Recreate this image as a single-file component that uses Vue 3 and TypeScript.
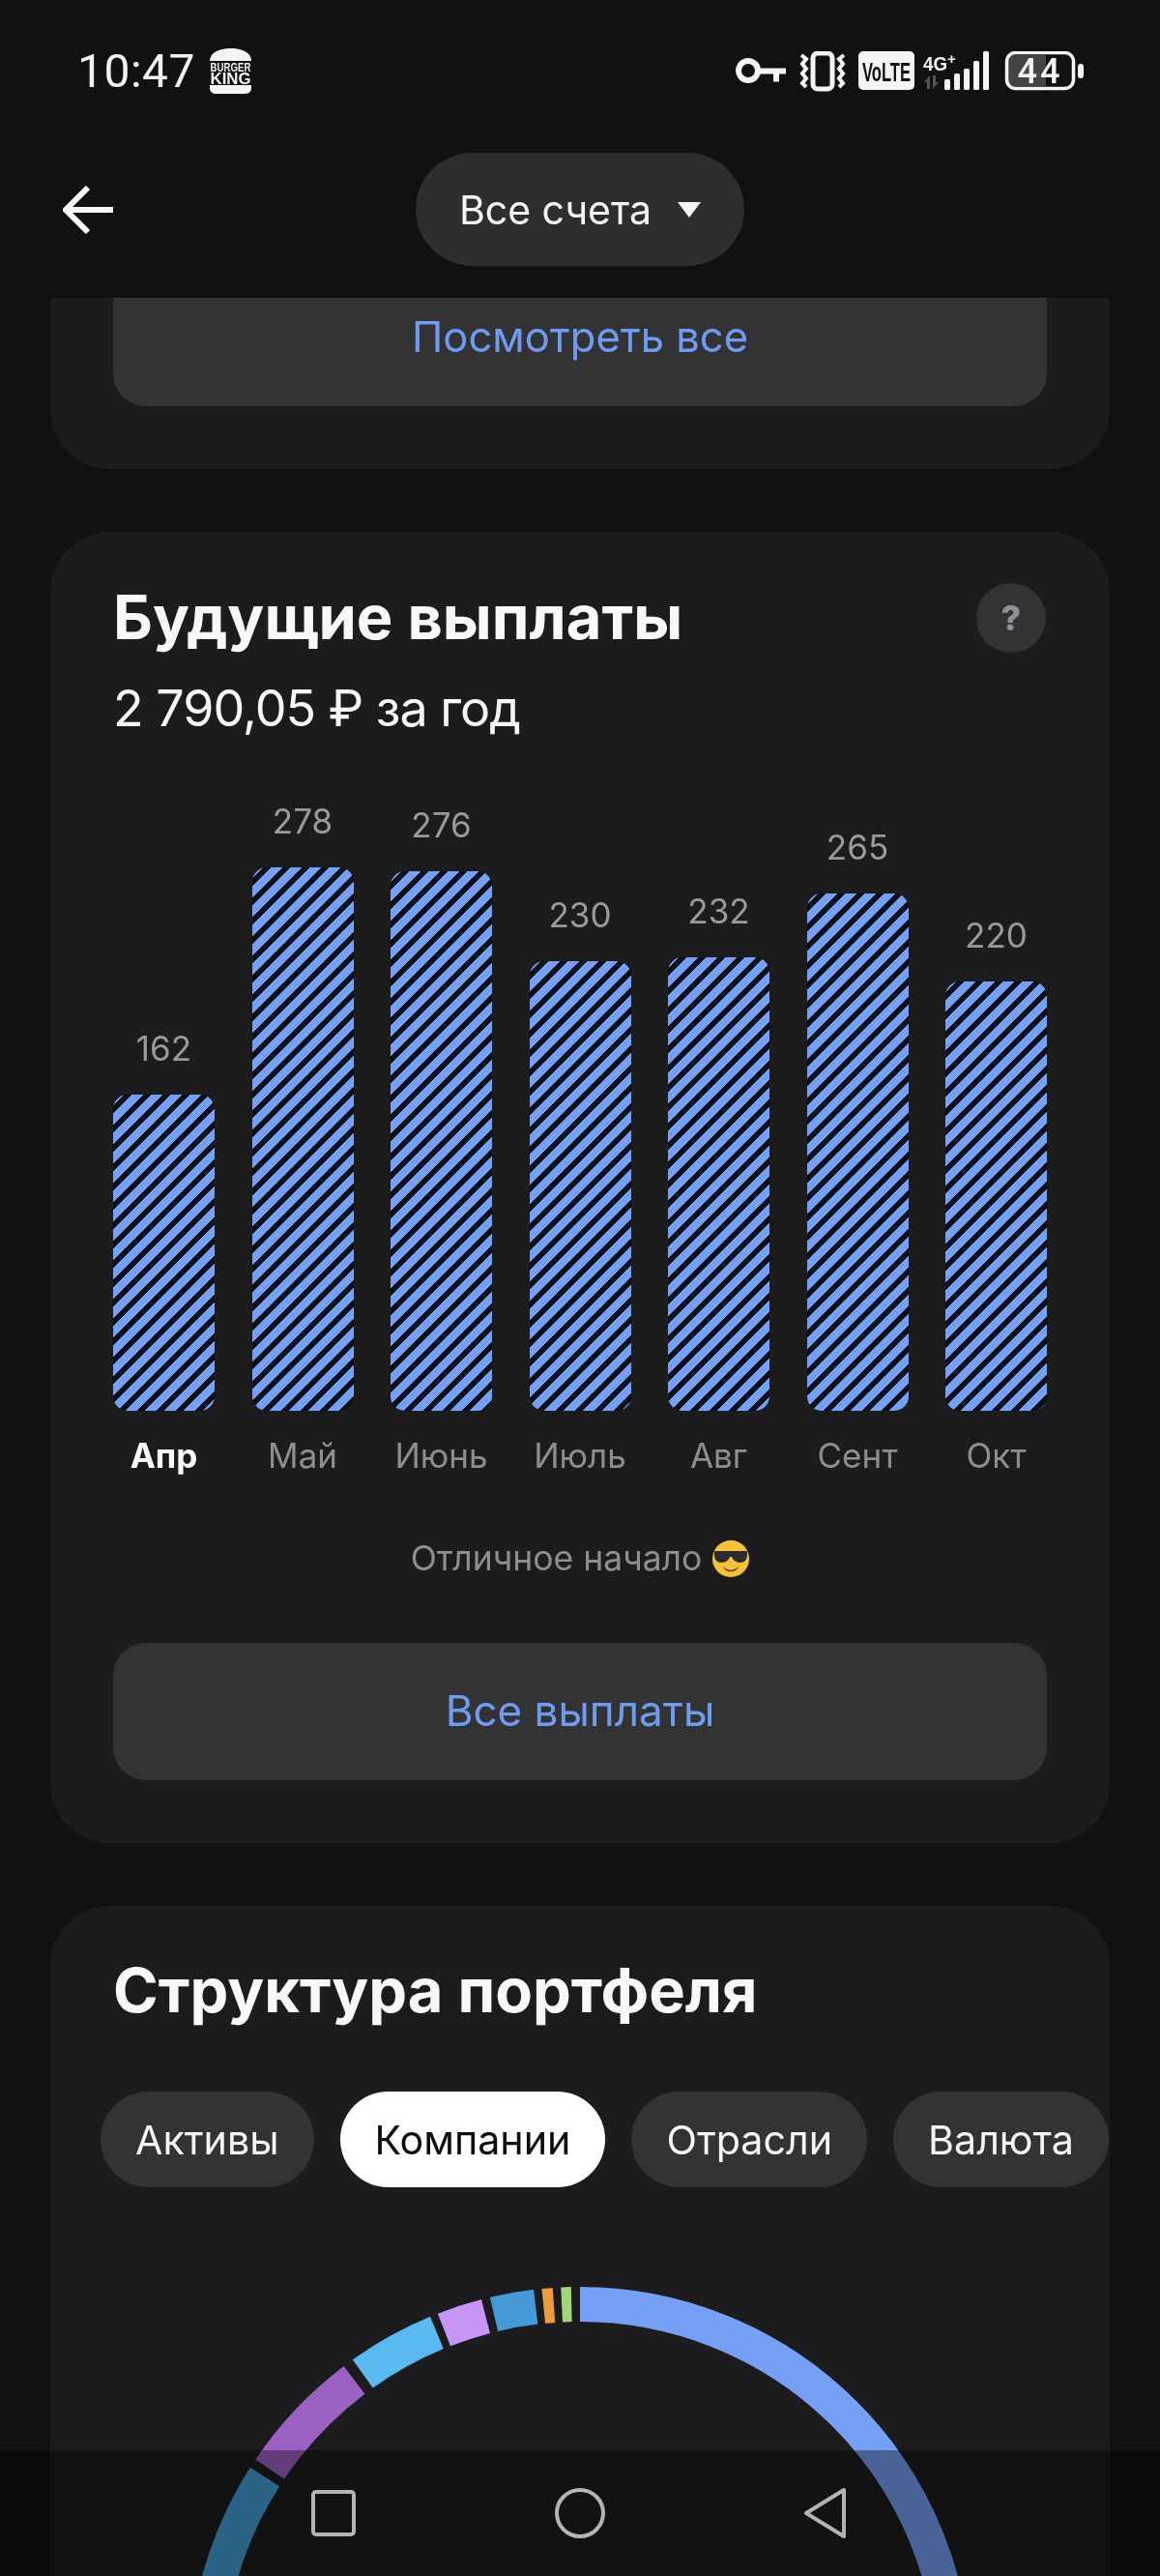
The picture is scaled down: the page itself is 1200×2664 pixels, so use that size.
<script setup lang="ts">
// значения выплат по месяцам
const payouts = [
  { month: 'Апр', value: 162, current: true },
  { month: 'Май', value: 278 },
  { month: 'Июнь', value: 276 },
  { month: 'Июль', value: 230 },
  { month: 'Авг', value: 232 },
  { month: 'Сент', value: 265 },
  { month: 'Окт', value: 220 },
];

const tabs = ['Активы', 'Компании', 'Отрасли', 'Валюта'];
const activeTab = 'Компании';

// сегменты кольца: углы от верхней точки, по часовой стрелке
const RING_R = 387;
const RING_C = 405;
const segments = [
  { from: 0, to: 90, color: '#75a0f4' },
  { from: -2.8, to: -1.3, color: '#a3d67c' },
  { from: -5.6, to: -4, color: '#eb9c3c' },
  { from: -13.3, to: -6.8, color: '#4599d6' },
  { from: -21.3, to: -14.6, color: '#c595f7' },
  { from: -35.5, to: -22.5, color: '#5bb9f2' },
  { from: -56, to: -37.1, color: '#9b61c2' },
  { from: -90, to: -57.4, color: '#459ed6' },
];

const arcPath = (from: number, to: number) => {
  const point = (deg: number) => {
    const rad = (deg * Math.PI) / 180;
    return `${(RING_C + RING_R * Math.sin(rad)).toFixed(2)} ${(RING_C - RING_R * Math.cos(rad)).toFixed(2)}`;
  };
  return `M${point(from)} A${RING_R} ${RING_R} 0 0 1 ${point(to)}`;
};
</script>

<template>
  <div class="screen">
    <header class="top">
      <div class="status">
        <div class="status-left">
          <span class="clock">10:47</span>
          <svg class="bk" width="43" height="47" viewBox="0 0 43 47">
            <path d="M0 13C0 5 9 0 21.500 0S43 5 43 13z" fill="#f4f4f4" />
            <text x="21.500" y="24" text-anchor="middle" textLength="42" lengthAdjust="spacingAndGlyphs" class="bk-top">BURGER</text>
            <text x="21.500" y="37" text-anchor="middle" textLength="42" lengthAdjust="spacingAndGlyphs" class="bk-bottom">KING</text>
            <path d="M0 38h43v3c0 4-3 6-7 6H7c-4 0-7-2-7-6z" fill="#f4f4f4" />
          </svg>
        </div>
        <svg class="status-icons" width="370" height="44" viewBox="0 0 370 44">
          <!-- ключ -->
          <circle cx="14" cy="20" r="10" fill="none" stroke="#f4f4f4" stroke-width="6" />
          <path d="M24 17.500h29v6h-7v8h-6v-8H24z" fill="#f4f4f4" />
          <!-- вибрация -->
          <rect x="81" y="2" width="20" height="37" rx="5" fill="none" stroke="#f4f4f4" stroke-width="5" />
          <path d="M69 4l5 4-4 5 4 5-4 5 4 5-4 5 4 4M113 4l-5 4 4 5-4 5 4 5-4 5 4 5-4 4" fill="none" stroke="#f4f4f4" stroke-width="4" />
          <!-- VoLTE -->
          <rect x="128" y="0" width="58" height="40" rx="5" fill="#f4f4f4" />
          <text x="157" y="31" text-anchor="middle" textLength="50" lengthAdjust="spacingAndGlyphs" class="volte">VoLTE</text>
          <!-- 4G+ -->
          <text x="195" y="20" textLength="25" lengthAdjust="spacingAndGlyphs" class="net">4G</text>
          <text x="220" y="13" class="net-plus">+</text>
          <path d="M202 25l-6 7h3v7h3zM205 39l6-7h-3v-7h-3z" fill="#555" />
          <rect x="217" y="29" width="6" height="11" rx="1.500" fill="#f4f4f4" />
          <rect x="227" y="23" width="6" height="17" rx="1.500" fill="#f4f4f4" />
          <rect x="237" y="18" width="6" height="22" rx="1.500" fill="#f4f4f4" />
          <rect x="247" y="10" width="6" height="30" rx="1.500" fill="#f4f4f4" />
          <rect x="257" y="0" width="6" height="40" rx="1.500" fill="#f4f4f4" />
          <!-- батарея -->
          <path d="M288 4h34v32h-34a6 6 0 0 1-6-6V10a6 6 0 0 1 6-6z" fill="#444" />
          <rect x="281.500" y="1.500" width="69" height="37" rx="9" fill="none" stroke="#f4f4f4" stroke-width="3.500" />
          <text x="316" y="33" text-anchor="middle" class="batt">44</text>
          <rect x="355" y="13" width="6" height="15" rx="3" fill="#f4f4f4" />
        </svg>
      </div>

      <div class="toolbar">
        <svg class="back" width="52" height="50" viewBox="0 0 52 50">
          <path d="M26 2L3 25l23 23M3 25h49" fill="none" stroke="#f6f6f6" stroke-width="6" />
        </svg>
        <button class="accounts">
          Все счета
          <span class="caret"></span>
        </button>
      </div>
    </header>

    <main class="scroller">
      <div class="scroll-inner">
        <section class="card card-first">
          <button class="wide-btn raised">Посмотреть все</button>
        </section>

        <section class="card">
          <div class="card-head">
            <h2 class="title">Будущие выплаты</h2>
            <span class="help">?</span>
          </div>
          <p class="total">2 790,05 ₽ за год</p>

          <div class="chart">
            <div v-for="item in payouts" :key="item.month" class="col">
              <span class="value">{{ item.value }}</span>
              <div class="bar" :style="{ height: item.value * 2.02 + 'px' }"></div>
              <span :class="['month', { current: item.current }]">{{ item.month }}</span>
            </div>
          </div>

          <p class="hint">
            Отличное начало
            <svg class="emoji" width="38" height="38" viewBox="0 0 38 38">
              <circle cx="19" cy="19" r="19" fill="#f5c33b" />
              <path d="M2 11h34v4c0 5-3 8-7 8-5 0-8-3-9-6h-2c-1 3-4 6-9 6-4 0-7-3-7-8z" fill="#2b2b2b" />
              <path d="M11 27c5 5 11 5 16 0-2 7-14 7-16 0z" fill="#5b3a1a" />
            </svg>
          </p>

          <button class="wide-btn">Все выплаты</button>
        </section>

        <section class="card card-last">
          <h2 class="title">Структура портфеля</h2>
          <div class="tabs">
            <span v-for="tab in tabs" :key="tab" :class="['tab', { active: tab === activeTab }]">{{ tab }}</span>
          </div>
          <svg class="ring" width="810" height="810" viewBox="0 0 810 810">
            <path v-for="seg in segments" :key="seg.color" :d="arcPath(seg.from, seg.to)" :stroke="seg.color" stroke-width="36" fill="none" />
          </svg>
        </section>
      </div>
    </main>

    <!-- затемнение под системной панелью -->
    <div class="nav-shade"></div>
    <nav class="navbar">
      <svg width="560" height="56" viewBox="0 0 560 56">
        <rect x="4" y="5" width="42" height="44" rx="3" fill="none" stroke="#b4b4b4" stroke-width="4" />
        <circle cx="280" cy="27" r="24" fill="none" stroke="#b4b4b4" stroke-width="4" />
        <path d="M553 3v48L514 27z" fill="none" stroke="#b4b4b4" stroke-width="4" stroke-linejoin="round" />
      </svg>
    </nav>
  </div>
</template>

<style scoped>
.screen {
  position: relative;
  display: flex;
  flex-direction: column;
  width: 1200px;
  height: 2664px;
  overflow: hidden;
  background: #111112;
  font-family: Inter, "Noto Sans", sans-serif;
  color: #f6f6f6;
}

/* шапка */
.top {
  flex: none;
  height: 308px;
  background: #111112;
  position: relative;
  z-index: 2;
}

.status {
  display: flex;
  justify-content: space-between;
  padding: 50px 70px 0 80px;
  height: 103px;
  box-sizing: border-box;
}

.status-left { display: flex; align-items: flex-start; gap: 15px; }

.clock {
  font-family: Roboto, sans-serif;
  font-size: 48px;
  line-height: 47px;
  letter-spacing: 0.5px;
  color: #f2f2f2;
}

.bk-top { font: 700 13px "Liberation Sans", sans-serif; fill: #f4f4f4; }
.bk-bottom { font: 700 16.500px "Liberation Sans", sans-serif; fill: #f4f4f4; }
.status-icons { margin-top: 3px; }
.volte { font: 700 28px "Liberation Sans", sans-serif; fill: #111; }
.net { font: 700 20px "Liberation Sans", sans-serif; fill: #f4f4f4; }
.net-plus { font: 700 15px "Liberation Sans", sans-serif; fill: #f4f4f4; }
.batt { font: 500 36px Roboto, sans-serif; letter-spacing: 3px; fill: #f4f4f4; }

.toolbar {
  position: relative;
  display: flex;
  justify-content: center;
  padding-top: 55px;
}

.back { position: absolute; left: 65px; top: 89px; }

.accounts {
  display: flex;
  align-items: center;
  gap: 27px;
  height: 117px;
  padding: 0 45px;
  border: none;
  border-radius: 59px;
  background: #2e2e2f;
  color: #f6f6f6;
  font-family: inherit;
  font-size: 41px;
}

.caret {
  width: 0;
  height: 0;
  border-left: 12px solid transparent;
  border-right: 12px solid transparent;
  border-top: 16px solid #f6f6f6;
}

/* прокручиваемая часть */
.scroller { flex: 1; overflow: hidden; }

.scroll-inner {
  display: flex;
  flex-direction: column;
  gap: 65px;
  margin-top: -49px;
}

.card {
  margin: 0 52px;
  padding: 50px 65px 65px;
  background: #1c1c1e;
  border-radius: 62px;
}

.card-first { padding-top: 20px; }

.card-last {
  height: 900px;
  padding-top: 50px;
  overflow: hidden;
  padding-left: 0;
  padding-right: 0;
  position: relative;
}

.card-last .title { margin-left: 65px; }

.card-head {
  display: flex;
  justify-content: space-between;
  align-items: center;
}

.title {
  margin: 0;
  font-size: 63.200px;
  line-height: 74px;
  font-weight: 700;
  color: #f8f8f8;
}

.help {
  display: flex;
  align-items: center;
  justify-content: center;
  width: 72px;
  height: 72px;
  margin: 3px 1px 0 0;
  border-radius: 50%;
  background: #333335;
  color: #909094;
  font-size: 36px;
  font-weight: 800;
}

.total {
  margin: 27px 0 0;
  font-size: 52px;
  line-height: 62px;
  letter-spacing: -1px;
  color: #f6f6f6;
}

/* график */
.chart {
  display: flex;
  justify-content: space-between;
  align-items: flex-end;
  height: 763px;
  margin-top: 0;
}

.col {
  display: flex;
  flex-direction: column;
  align-items: center;
  width: 105px;
}

.value {
  font-size: 35px;
  line-height: 42px;
  color: #9a9a9c;
  margin-bottom: 27px;
  white-space: nowrap;
}

.bar {
  width: 105px;
  border-radius: 15px;
  background: repeating-linear-gradient(135deg, #75a0f4 0 8px, #08101c 8px 14.14px);
}

.month {
  margin-top: 24px;
  font-size: 35px;
  line-height: 44px;
  color: #8e8e90;
  white-space: nowrap;
}

.month.current { color: #fafafa; font-weight: 700; }

.hint {
  display: flex;
  justify-content: center;
  align-items: center;
  gap: 11px;
  margin: 63px 0 0;
  font-size: 35.500px;
  line-height: 44px;
  color: #8e8e90;
}

.wide-btn {
  display: block;
  width: 100%;
  height: 141px;
  padding: 0 0 2px;
  border: none;
  border-radius: 34px;
  background: #333335;
  color: #6f9cf0;
  font-family: inherit;
  font-size: 44px;
}

.wide-btn.raised { padding-bottom: 4px; font-size: 43.500px; }

.hint + .wide-btn { margin-top: 65px; height: 142px; }

/* вкладки */
.tabs {
  display: flex;
  gap: 27px;
  margin: 68px 0 0 52px;
  overflow: hidden;
}

.tab {
  flex: none;
  display: flex;
  align-items: center;
  height: 99px;
  padding: 0 36px;
  border-radius: 50px;
  background: #333335;
  font-size: 41.200px;
  color: #f6f6f6;
}

.tab.active { background: #fff; color: #0c0c0c; }

.ring {
  position: absolute;
  left: 143px;
  top: 394px;
}

/* системная панель поверх контента */
.nav-shade {
  position: absolute;
  left: 0;
  right: 0;
  bottom: 0;
  z-index: 3;
  height: 130px;
  background: #9e9e9e;
  mix-blend-mode: multiply;
}

.navbar {
  position: absolute;
  left: 0;
  right: 0;
  bottom: 0;
  z-index: 4;
  height: 130px;
  box-sizing: border-box;
  padding: 38px 0 0 320px;
}
</style>
